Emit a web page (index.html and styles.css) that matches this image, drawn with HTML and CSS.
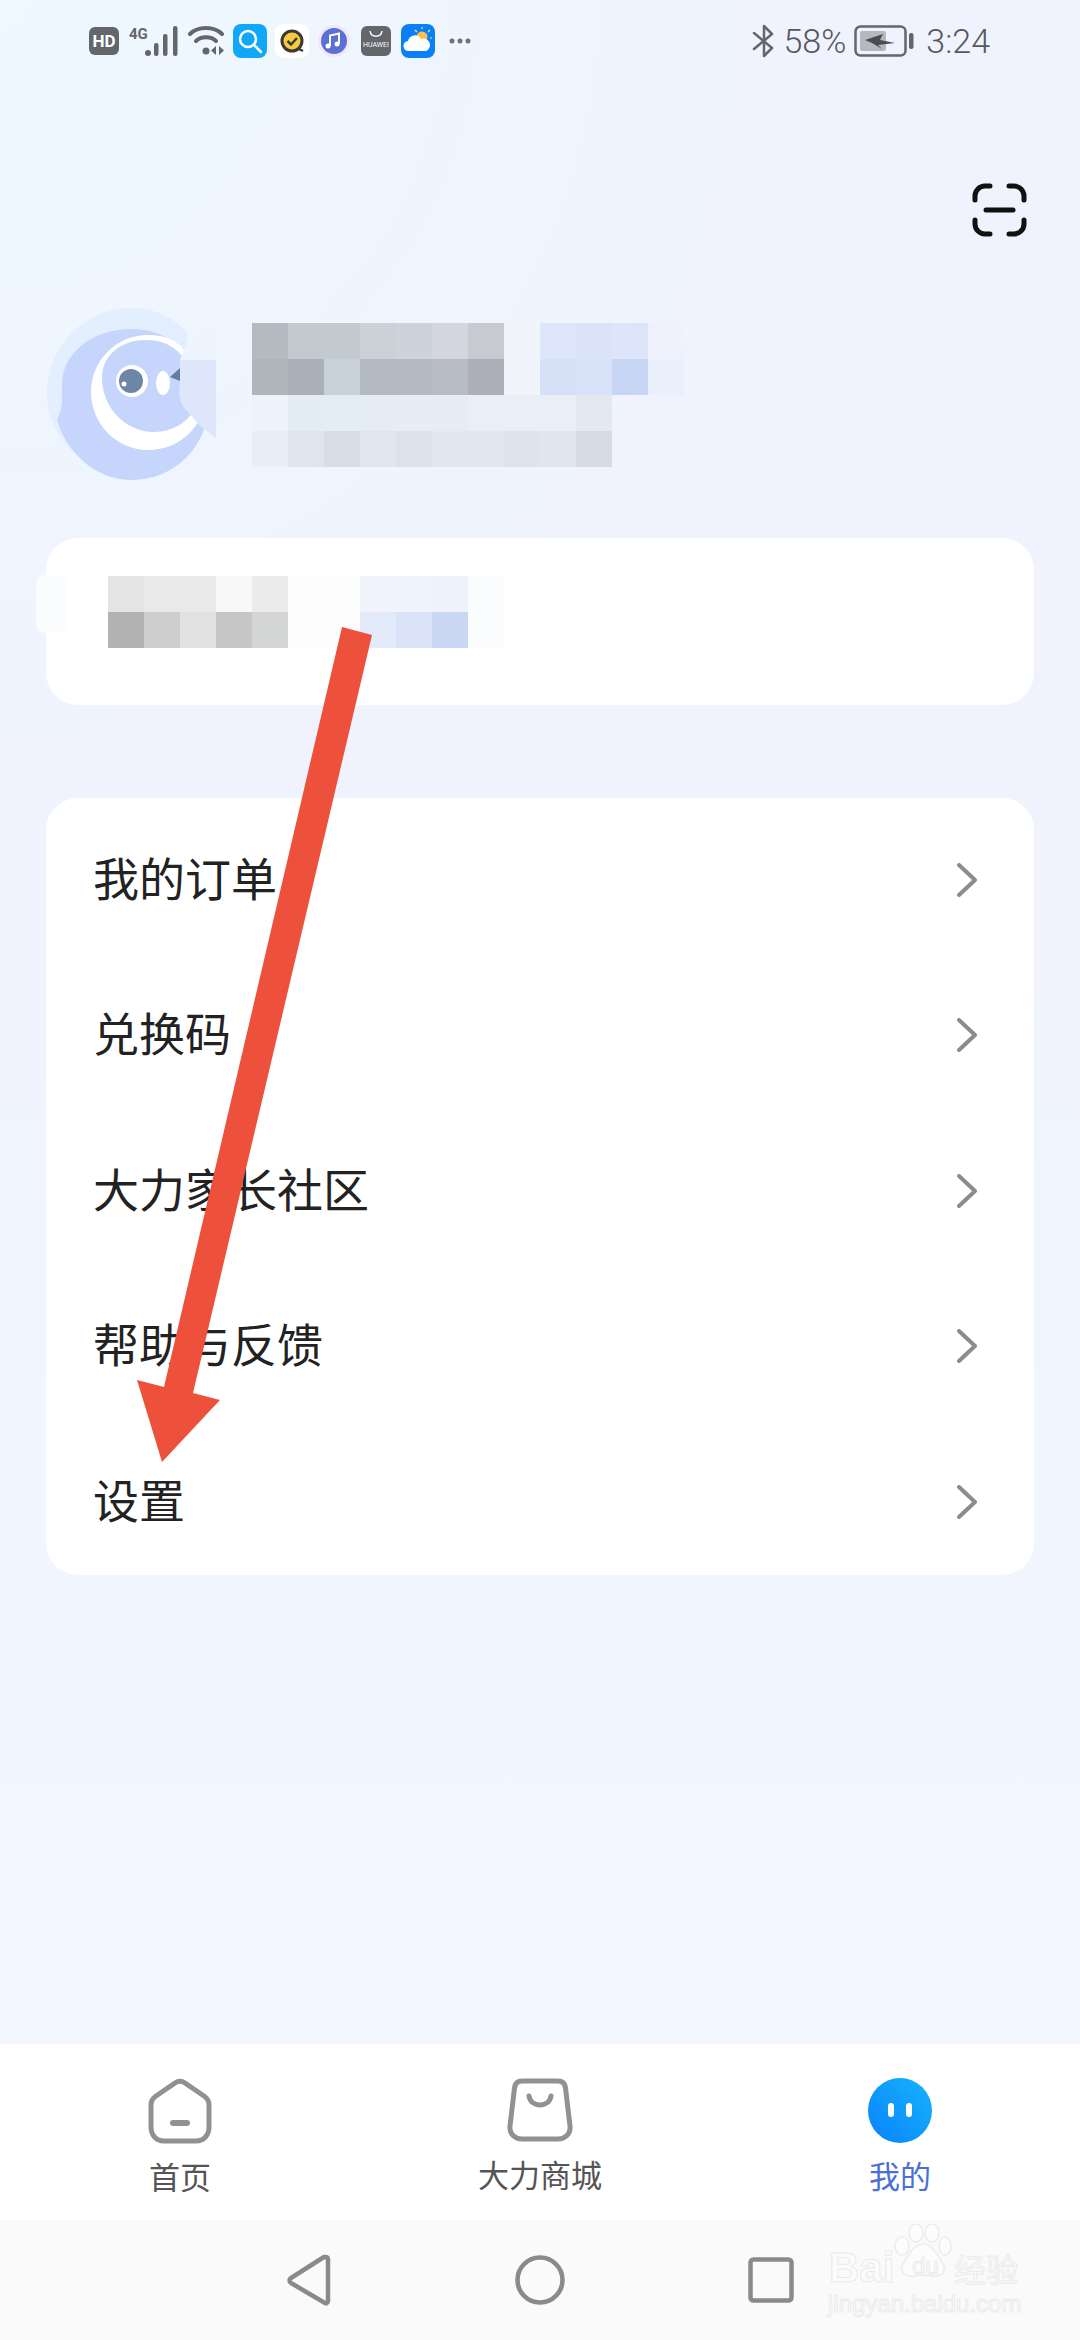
FILE: index.html
```html
<!DOCTYPE html>
<html lang="zh-CN">
<head>
  <meta charset="UTF-8" />
  <meta name="viewport" content="width=device-width, initial-scale=1.0"/>
  <title>我的</title>
  <link rel="stylesheet" href="styles.css">
</head>
<body>
  <div class="page">
    <div class="status-bar">
      <div class="status-left">
        <svg width="30" height="28" viewBox="0 0 30 28"><rect width="30" height="28" rx="6" fill="#63666b"/><text x="15" y="20" class="hd-text">HD</text></svg>
        <svg width="49" height="30" viewBox="0 0 49 30"><text x="0" y="13" class="net-text">4G</text><circle cx="19" cy="27" r="3" fill="#63666b"/><rect x="25" y="17" width="4.5" height="13" rx="2" fill="#63666b"/><rect x="34" y="8" width="4.5" height="22" rx="2" fill="#63666b"/><rect x="44" y="0" width="4.5" height="30" rx="2" fill="#63666b"/></svg>
        <svg width="38" height="32" viewBox="0 0 38 32"><g fill="none" stroke="#63666b" stroke-width="4" stroke-linecap="round"><path d="M2 9C10 1 26 1 34 9"/><path d="M8 16C13 11 23 11 28 16"/></g><circle cx="18" cy="26" r="3.5" fill="#63666b"/><path d="M28 21v9l-5-4.500zM31 21v9l5-4.500z" fill="#63666b"/></svg>
        <svg class="near" width="34" height="34" viewBox="0 0 34 34"><rect width="34" height="34" rx="8" fill="#10a7f8"/><circle cx="15" cy="15" r="8" fill="none" stroke="#fff" stroke-width="2.500"/><path d="M21 21l7 7" stroke="#fff" stroke-width="2.500" stroke-linecap="round"/></svg>
        <svg class="close" width="34" height="34" viewBox="0 0 34 34"><rect width="34" height="34" rx="8" fill="#fff"/><circle cx="17" cy="17" r="10" fill="#f5cb3f" stroke="#3a3a32" stroke-width="3"/><path d="M12.500 17l3.500 3.500 6-6.500" fill="none" stroke="#3a3a32" stroke-width="2.500"/><path d="M24 25l4 2" stroke="#3a3a32" stroke-width="2.500"/></svg>
        <svg class="close" width="34" height="34" viewBox="0 0 34 34"><circle cx="17" cy="17" r="16" fill="#f3e6fb"/><circle cx="17" cy="17" r="13" fill="#5a70d2"/><path d="M13 22V11.500l9-2V20" fill="none" stroke="#fff" stroke-width="2"/><circle cx="11" cy="22" r="2.500" fill="#fff"/><circle cx="20" cy="20" r="2.500" fill="#fff"/></svg>
        <svg width="30" height="30" viewBox="0 0 30 30"><rect width="30" height="30" rx="6" fill="#63666b"/><path d="M9 5c1 7 11 7 12 0" fill="none" stroke="#fff" stroke-width="1.500"/><text x="15" y="21" class="brand-text">HUAWEI</text></svg>
        <svg width="34" height="34" viewBox="0 0 34 34"><rect width="34" height="34" rx="8" fill="#0a80f6"/><circle cx="21" cy="13" r="5.500" fill="#fbc04a"/><path d="M21 3v2M29 6l-2 2M31 14h-2M14 6l2 2" stroke="#fbe29a" stroke-width="1.200"/><path d="M8 27a5 5 0 0 1-1-10 7 7 0 0 1 13-2 6 6 0 0 1 5 12z" fill="#fff"/></svg>
        <svg class="far" width="22" height="6" viewBox="0 0 22 6"><circle cx="3" cy="3" r="2.500" fill="#6f7175"/><circle cx="11" cy="3" r="2.500" fill="#6f7175"/><circle cx="19" cy="3" r="2.500" fill="#6f7175"/></svg>
      </div>
      <div class="status-right">
        <svg width="23" height="34" viewBox="0 0 23 34"><path d="M2 9l18 15-8 8V2l8 8L2 25" fill="none" stroke="#63666b" stroke-width="2.500" stroke-linejoin="round" stroke-linecap="round"/></svg>
        <span class="status-text">58%</span>
        <svg width="60" height="32" viewBox="0 0 60 32"><rect x="1.500" y="1.500" width="50" height="29" rx="5" fill="none" stroke="#63666b" stroke-width="2.500"/><rect x="6" y="6" width="26" height="20" rx="2" fill="#b7b8bf"/><path d="M11 15L29 9l-3 6 15 3-17 2 4 4-10-6z" fill="#4b4c52"/><rect x="55" y="8" width="4.500" height="16" rx="2" fill="#63666b"/></svg>
        <span class="status-text time">3:24</span>
      </div>
    </div>

    <main class="content">
      <div class="scan-row">
        <svg width="55" height="54" viewBox="0 0 55 54"><g fill="none" stroke="#111" stroke-width="5" stroke-linecap="round"><path d="M3 17V13A10 10 0 0 1 13 3h5"/><path d="M37 3h5a10 10 0 0 1 10 10v4"/><path d="M3 37v4a10 10 0 0 0 10 10h5"/><path d="M52 37v4a10 10 0 0 1-10 10h-5"/><path d="M14 27h27"/></g></svg>
      </div>

      <section class="profile">
        <svg class="avatar" width="206" height="172" viewBox="46 308 206 172">
          <path d="M47 394c0-48 38-86 85-86 24 0 42 10 56 26l-8 100-60 40c-40-6-73-40-73-80z" fill="#e3eefe"/>
          <path d="M57 420c6-12 5-20 5-35 0-32 30-56 70-56 42 0 76 34 76 76 0 42-34 75-76 75-34 0-64-24-75-60z" fill="#c6d5fb"/>
          <path d="M148 335c-32 0-57 26-57 57s25 58 57 58c30 0 50-20 56-42l-4-18c-2 26-22 42-46 42-28 0-52-24-52-54 0-22 18-38 44-38 14 0 26 4 36 16l4-4c-10-12-20-17-38-17z" fill="#fff"/>
          <circle cx="132" cy="381" r="16" fill="#fff"/>
          <circle cx="131" cy="381" r="12" fill="#6d86a8"/>
          <circle cx="124" cy="384" r="2.500" fill="#fff"/>
          <ellipse cx="163" cy="383" rx="7" ry="12" fill="#fff"/>
          <path d="M170 377l10-9v13z" fill="#647d9f"/>
          <path d="M180 360h36v78l-16-12-12-14c-8-6-10-18-8-30z" fill="#dde6fb"/>
          <path d="M190 334l26-8v34h-36z" fill="#eef5fe"/>
        </svg>
        <svg class="mosaic-lg" width="432" height="144" viewBox="0 0 432 144">
          <g>
            <rect x="0" width="36" height="36" fill="#b3bac0"/><rect x="36" width="36" height="36" fill="#c2c9cf"/><rect x="72" width="36" height="36" fill="#c2c9cf"/><rect x="108" width="36" height="36" fill="#cbd1d7"/><rect x="144" width="36" height="36" fill="#cdd3da"/><rect x="180" width="36" height="36" fill="#d3d6df"/><rect x="216" width="36" height="36" fill="#c8cad2"/><rect x="252" width="36" height="36" fill="#f1f4fb"/><rect x="288" width="36" height="36" fill="#dde6fa"/><rect x="324" width="36" height="36" fill="#dbe3f9"/><rect x="360" width="36" height="36" fill="#dde5fb"/><rect x="396" width="36" height="36" fill="#eff2fc"/>
          </g>
          <g transform="translate(0 36)">
            <rect x="0" width="36" height="36" fill="#aeb5bb"/><rect x="36" width="36" height="36" fill="#a9b0b8"/><rect x="72" width="36" height="36" fill="#c9d1d8"/><rect x="108" width="36" height="36" fill="#b3bac1"/><rect x="144" width="36" height="36" fill="#b3bac1"/><rect x="180" width="36" height="36" fill="#b8bcc5"/><rect x="216" width="36" height="36" fill="#acafb7"/><rect x="252" width="36" height="36" fill="#f1f4fb"/><rect x="288" width="36" height="36" fill="#d6e1f8"/><rect x="324" width="36" height="36" fill="#d7e2f9"/><rect x="360" width="36" height="36" fill="#c6d5f3"/><rect x="396" width="36" height="36" fill="#e9effb"/>
          </g>
          <g transform="translate(0 72)">
            <rect x="0" width="36" height="36" fill="#edf3fb"/><rect x="36" width="36" height="36" fill="#e3ebf3"/><rect x="72" width="36" height="36" fill="#e4ecf4"/><rect x="108" width="36" height="36" fill="#e5ecf4"/><rect x="144" width="36" height="36" fill="#e7edf5"/><rect x="180" width="36" height="36" fill="#e6ebf4"/><rect x="216" width="36" height="36" fill="#eaeef6"/><rect x="252" width="36" height="36" fill="#eaeef6"/><rect x="288" width="36" height="36" fill="#eaeef6"/><rect x="324" width="36" height="36" fill="#e4e8f0"/>
          </g>
          <g transform="translate(0 108)">
            <rect x="0" width="36" height="36" fill="#e8edf6"/><rect x="36" width="36" height="36" fill="#dfe4ed"/><rect x="72" width="36" height="36" fill="#d7dde6"/><rect x="108" width="36" height="36" fill="#e1e6ef"/><rect x="144" width="36" height="36" fill="#dde1ea"/><rect x="180" width="36" height="36" fill="#e3e7f0"/><rect x="216" width="36" height="36" fill="#e3e7f0"/><rect x="252" width="36" height="36" fill="#dee3ec"/><rect x="288" width="36" height="36" fill="#e1e5ee"/><rect x="324" width="36" height="36" fill="#d6dbe4"/>
          </g>
        </svg>
      </section>

      <section class="card vip-card">
        <svg width="396" height="72" viewBox="0 0 396 72">
          <g>
            <rect x="0" width="36" height="36" fill="#e4e4e4"/><rect x="36" width="36" height="36" fill="#e9e9e9"/><rect x="72" width="36" height="36" fill="#e9e9e9"/><rect x="108" width="36" height="36" fill="#f8f8f8"/><rect x="144" width="36" height="36" fill="#ebebeb"/><rect x="180" width="36" height="36" fill="#fdfdfd"/><rect x="216" width="36" height="36" fill="#fdfdfd"/><rect x="252" width="36" height="36" fill="#f1f4fc"/><rect x="288" width="36" height="36" fill="#f0f4fc"/><rect x="324" width="36" height="36" fill="#eef2fb"/><rect x="360" width="36" height="36" fill="#fbfcfe"/>
          </g>
          <g transform="translate(0 36)">
            <rect x="0" width="36" height="36" fill="#b3b3b3"/><rect x="36" width="36" height="36" fill="#cecece"/><rect x="72" width="36" height="36" fill="#e2e2e2"/><rect x="108" width="36" height="36" fill="#c6c6c6"/><rect x="144" width="36" height="36" fill="#d4d5d5"/><rect x="180" width="36" height="36" fill="#fdfdfd"/><rect x="216" width="36" height="36" fill="#fdfdfd"/><rect x="252" width="36" height="36" fill="#e3eafa"/><rect x="288" width="36" height="36" fill="#dbe3f8"/><rect x="324" width="36" height="36" fill="#c9d7f3"/><rect x="360" width="36" height="36" fill="#fbfcfe"/>
          </g>
        </svg>
      </section>

      <section class="card menu">
        <div class="menu-row"><span>我的订单</span><svg class="chevron" width="20" height="34" viewBox="0 0 20 34"><path d="M2 2l16 15L2 32"/></svg></div>
        <div class="menu-row"><span>兑换码</span><svg class="chevron" width="20" height="34" viewBox="0 0 20 34"><path d="M2 2l16 15L2 32"/></svg></div>
        <div class="menu-row"><span>大力家长社区</span><svg class="chevron" width="20" height="34" viewBox="0 0 20 34"><path d="M2 2l16 15L2 32"/></svg></div>
        <div class="menu-row"><span>帮助与反馈</span><svg class="chevron" width="20" height="34" viewBox="0 0 20 34"><path d="M2 2l16 15L2 32"/></svg></div>
        <div class="menu-row"><span>设置</span><svg class="chevron" width="20" height="34" viewBox="0 0 20 34"><path d="M2 2l16 15L2 32"/></svg></div>
      </section>
    </main>

    <nav class="tab-bar">
      <div class="tab">
        <svg width="64" height="66" viewBox="0 0 64 66"><path d="M27 5L8 18c-3 2-5 5-5 9v22c0 8 5 14 13 14h32c8 0 13-6 13-14V27c0-4-2-7-5-9L37 5c-3-2-7-2-10 0z" fill="none" stroke="#8f9193" stroke-width="5"/><rect x="22" y="42" width="20" height="6" rx="3" fill="#8f9193"/></svg>
        <span>首页</span>
      </div>
      <div class="tab">
        <svg width="66" height="64" viewBox="0 0 66 64"><path d="M15 3h36c5 0 7 3 7.500 7L63 48c1 8-5 13-12 13H15C8 61 2 56 3 48l4.500-38C8 6 10 3 15 3z" fill="none" stroke="#8f9193" stroke-width="5"/><path d="M22 18c2 12 20 12 22 0" fill="none" stroke="#8f9193" stroke-width="5" stroke-linecap="round"/></svg>
        <span>大力商城</span>
      </div>
      <div class="tab active">
        <svg width="64" height="65" viewBox="0 0 64 65"><defs><linearGradient id="faceFill" x1="1" y1="0" x2="0" y2="1"><stop offset="0" stop-color="#14b4fd"/><stop offset="1" stop-color="#0a82fb"/></linearGradient></defs><ellipse cx="32" cy="32.500" rx="32" ry="32.500" fill="url(#faceFill)"/><rect x="20" y="25" width="6" height="14" rx="3" fill="#fff"/><rect x="38" y="25" width="6" height="14" rx="3" fill="#fff"/></svg>
        <span>我的</span>
      </div>
    </nav>

    <div class="nav-bar">
      <svg width="44" height="52" viewBox="0 0 44 52"><path d="M39 3c1 0 2 1 2 2v42c0 2-2 3-3 2L4 29c-2-2-2-4 0-5L37 3z" fill="none" stroke="#8a8a8a" stroke-width="4.500" stroke-linejoin="round"/></svg>
      <svg width="50" height="50" viewBox="0 0 50 50"><circle cx="25" cy="25" r="22.500" fill="none" stroke="#8a8a8a" stroke-width="4.500"/></svg>
      <svg width="46" height="46" viewBox="0 0 46 46"><rect x="2.500" y="2.500" width="41" height="41" rx="3" fill="none" stroke="#8a8a8a" stroke-width="4.500"/></svg>
      <div class="watermark">
        <svg class="paw" width="58" height="54" viewBox="0 0 58 54"><g fill="#fcfcfc" stroke="#ebebeb" stroke-width="1.500"><ellipse cx="8" cy="22" rx="7" ry="9"/><ellipse cx="22" cy="9" rx="7" ry="9"/><ellipse cx="38" cy="9" rx="7" ry="9"/><ellipse cx="51" cy="22" rx="6" ry="9"/><path d="M29 20c10 0 16 14 20 20 4 8-2 13-10 12-6-1-14-1-20 0-8 1-14-5-10-12 4-6 10-20 20-20z"/></g></svg>
        <span class="wm-bai">Bai</span>
        <span class="wm-du">du</span>
        <span class="wm-cn">经验</span>
        <span class="wm-url">jingyan.baidu.com</span>
      </div>
    </div>

    <svg class="arrow" width="1080" height="2340" viewBox="0 0 1080 2340"><polygon points="342,627 372,635 193,1393 220,1400 162,1462 137,1380 164,1387" fill="#ee513b"/></svg>
  </div>
</body>
</html>
```

FILE: styles.css
```css
body {
  margin: 0;
  font-family: "Noto Sans CJK SC", "Noto Sans", sans-serif;
}
.page {
  position: relative;
  width: 1080px;
  height: 2340px;
  display: flex;
  flex-direction: column;
  overflow: hidden;
  background:
    radial-gradient(ellipse 800px 800px at 0 0, #eef8ff, rgba(238, 248, 255, 0)),
    linear-gradient(180deg, #f0f3fd 0, #f0f3fd 700px, #f1f5fe 1400px, #f3f7fe 100%);
}
.status-bar {
  height: 82px;
  padding: 0 90px 0 89px;
  display: flex;
  justify-content: space-between;
  align-items: center;
  flex-shrink: 0;
}
.status-left {
  display: flex;
  align-items: center;
  gap: 10px;
}
.status-left .near {
  margin-left: -3px;
}
.status-left .close {
  margin-left: -2px;
}
.status-left .far {
  margin-left: 4px;
}
.status-right {
  display: flex;
  align-items: center;
  gap: 8px;
}
.status-text {
  font-family: Roboto, sans-serif;
  font-size: 34px;
  font-weight: 300;
  color: #55585d;
}
.time {
  margin-left: 4px;
}
.hd-text {
  font-family: Roboto, sans-serif;
  font-size: 17px;
  font-weight: 700;
  fill: #fff;
  text-anchor: middle;
}
.net-text {
  font-family: Roboto, sans-serif;
  font-size: 15px;
  font-weight: 700;
  fill: #63666b;
}
.brand-text {
  font-family: Roboto, sans-serif;
  font-size: 7px;
  fill: #fff;
  text-anchor: middle;
}
.content {
  flex: 1;
  padding: 0 46px;
}
.scan-row {
  margin-top: 101px;
  padding-right: 7px;
  display: flex;
  justify-content: flex-end;
}
.scan-row svg {
  display: block;
}
.profile {
  margin-top: 71px;
  height: 172px;
  display: flex;
  align-items: flex-start;
}
.mosaic-lg {
  margin-top: 15px;
}
.card {
  background: #fff;
  border-radius: 32px;
}
.vip-card {
  position: relative;
  margin-top: 58px;
  height: 167px;
  padding: 38px 0 0 62px;
  box-sizing: border-box;
}
.vip-card::before {
  content: "";
  position: absolute;
  left: -10px;
  top: 37px;
  width: 30px;
  height: 58px;
  border-radius: 8px;
  background: #fbfcfe;
}
.vip-card svg {
  display: block;
  position: relative;
}
.menu {
  margin-top: 93px;
  height: 777px;
  padding-top: 4px;
  box-sizing: border-box;
}
.menu-row {
  height: 155.5px;
  padding: 0 57px 0 47px;
  display: flex;
  justify-content: space-between;
  align-items: center;
  font-size: 46px;
  color: #222;
}
.menu-row span {
  padding-bottom: 8px;
}
.chevron {
  fill: none;
  stroke: #8c8c8c;
  stroke-width: 4;
  stroke-linecap: round;
  stroke-linejoin: round;
}
.tab-bar {
  height: 176px;
  flex-shrink: 0;
  background: #fff;
  display: grid;
  grid-template-columns: repeat(3, 1fr);
}
.tab {
  padding-top: 34px;
  display: flex;
  flex-direction: column;
  align-items: center;
  gap: 10px;
  font-size: 31px;
  line-height: 44px;
  color: #555;
}
.tab svg {
  display: block;
}
.tab.active {
  color: #4a6fd8;
}
.nav-bar {
  position: relative;
  height: 120px;
  flex-shrink: 0;
  background: #fafafa;
  display: grid;
  grid-template-columns: repeat(3, 231px);
  padding-left: 193px;
  align-items: center;
  justify-items: center;
}
.watermark {
  position: absolute;
  left: 828px;
  top: 4px;
  width: 200px;
  height: 104px;
}
.watermark span {
  position: absolute;
  color: #fbfbfb;
  -webkit-text-stroke: 1px #ebebeb;
  white-space: nowrap;
}
.paw {
  position: absolute;
  left: 66px;
  top: 0;
}
.wm-bai {
  left: 1px;
  top: 20px;
  font-family: "Liberation Sans", sans-serif;
  font-weight: 700;
  font-size: 42px;
  line-height: 48px;
}
.wm-du {
  left: 84px;
  top: 28px;
  font-family: "Liberation Sans", sans-serif;
  font-size: 24px;
  line-height: 28px;
}
.wm-cn {
  left: 126px;
  top: 22px;
  font-size: 32px;
  line-height: 44px;
}
.wm-url {
  left: 0;
  top: 66px;
  font-family: "Liberation Sans", sans-serif;
  font-size: 24px;
  line-height: 28px;
}
.arrow {
  position: absolute;
  left: 0;
  top: 0;
  pointer-events: none;
}
```
